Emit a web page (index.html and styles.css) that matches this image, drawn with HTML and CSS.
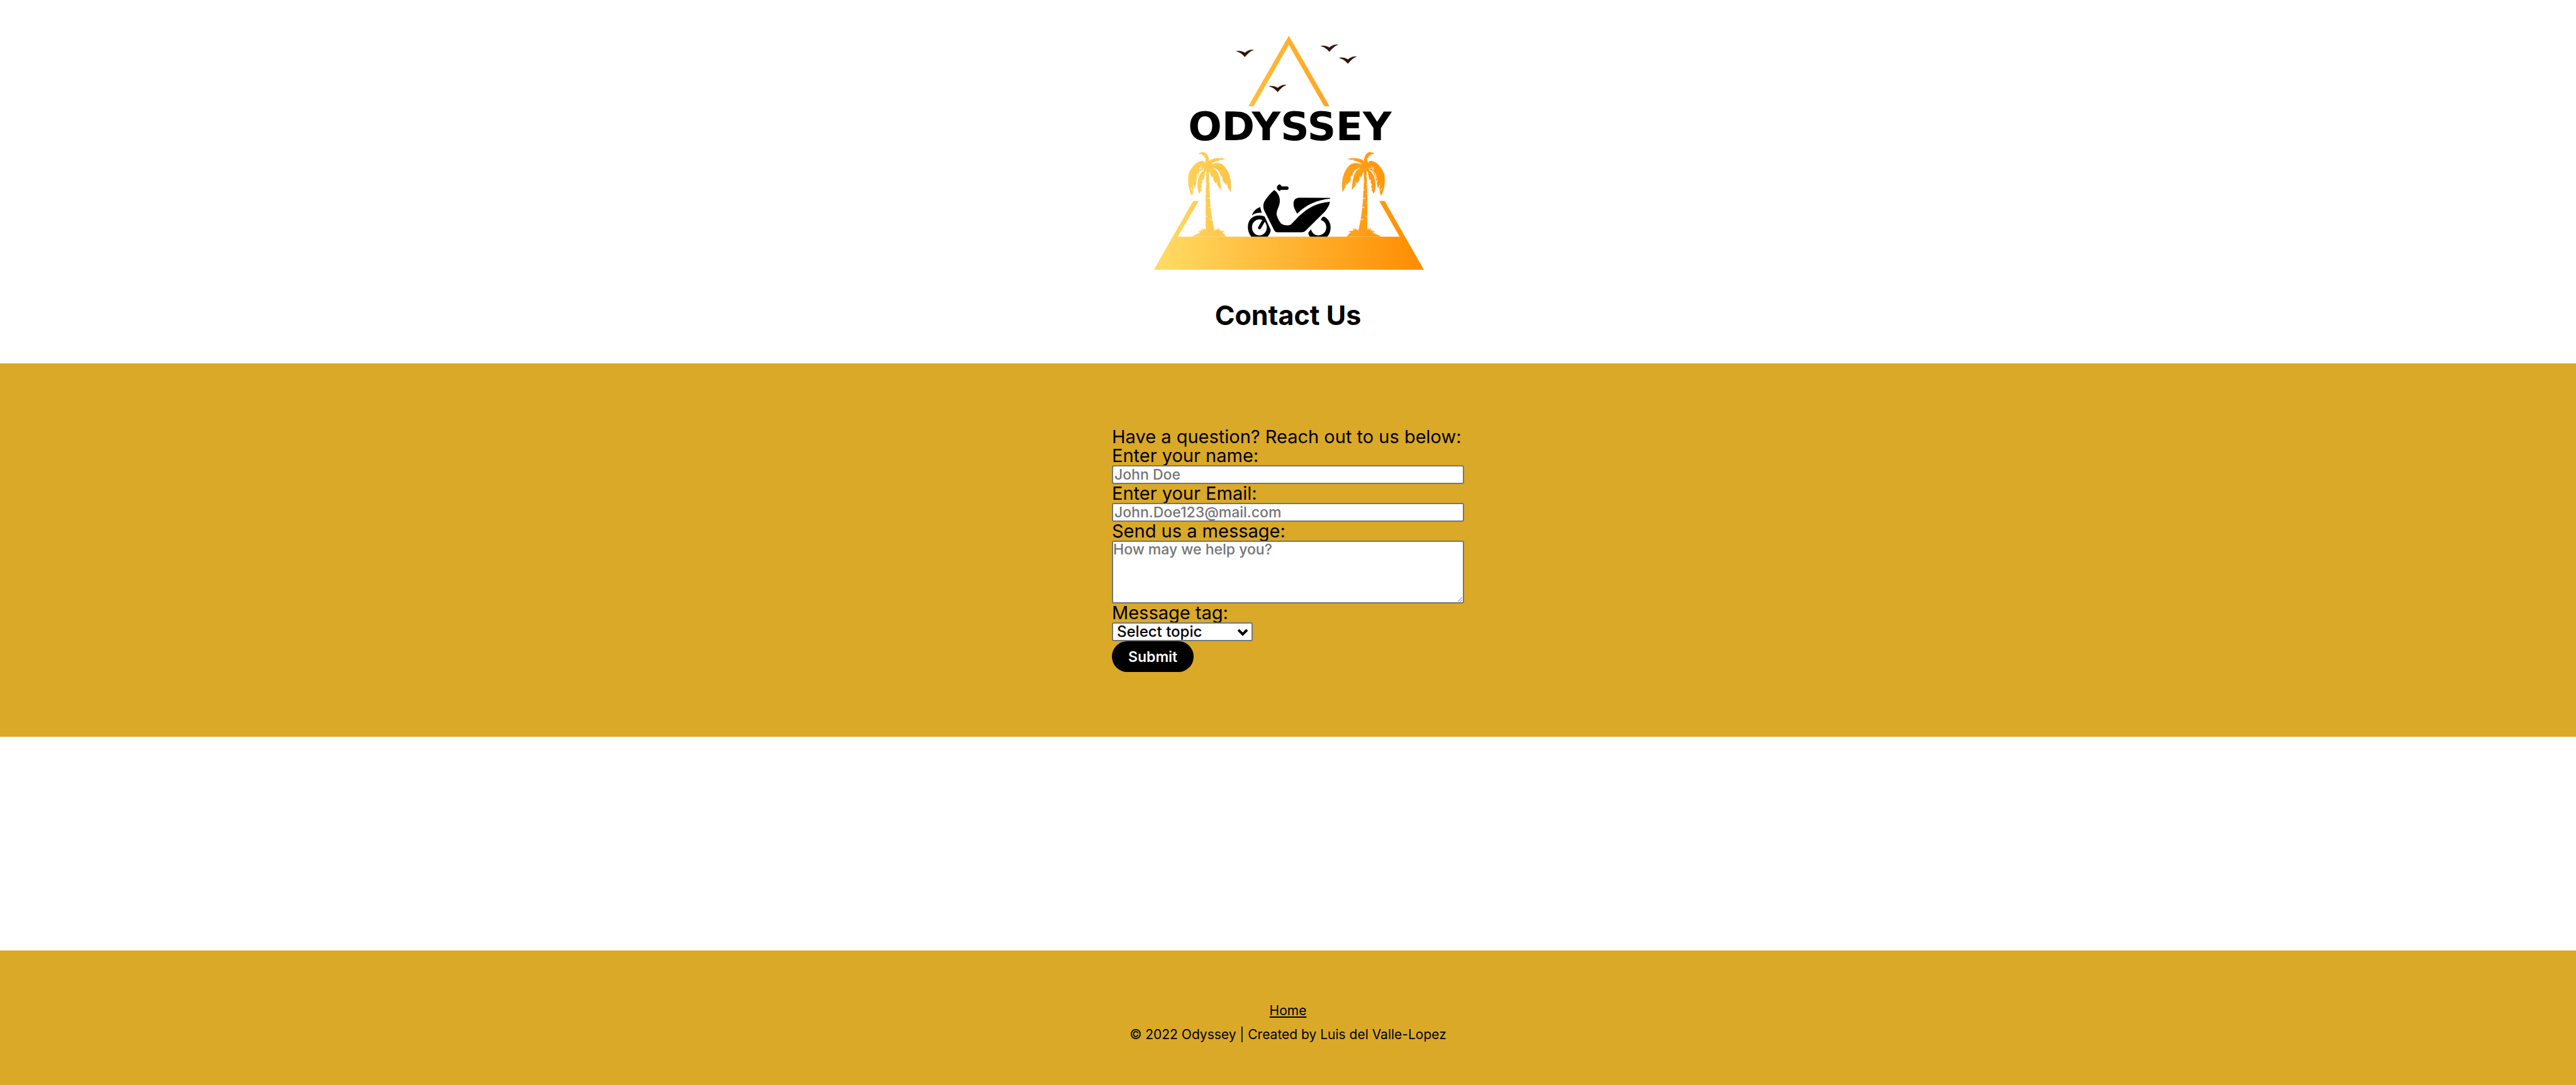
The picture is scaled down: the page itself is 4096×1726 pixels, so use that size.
FILE: index.html
```html
<!DOCTYPE html>
<html lang="en">
<head>
<meta charset="utf-8">
<title>Odyssey | Contact Us</title>
<link rel="stylesheet" href="styles.css">
</head>
<body>
<header class="header">
  <svg class="logo" viewBox="0 0 457 397" role="img" aria-label="Odyssey">
    <defs>
      <linearGradient id="sunset" gradientUnits="userSpaceOnUse" x1="50" y1="1343" x2="1523" y2="1260">
        <stop offset="0" stop-color="#ffdd66"/>
        <stop offset="1" stop-color="#ff8c00"/>
      </linearGradient>
      <path id="palm" d="M118,42 C130,30 148,28 160,38 C172,50 177,66 176,80 C198,66 225,60 270,69 L242,76 L237,71 L234,79 C215,81 198,90 186,101 C212,88 240,88 258,106 C292,140 304,190 296,254 L281,226 L277,200 L273,215 L264,204 L252,190 L249,160 L243,168 C236,140 225,122 193,119 C224,128 240,160 244,242 L222,214 L223,192 L216,206 L202,188 L199,162 L194,176 C188,162 184,148 178,137 L177,170 C177,210 180,250 182,290 C186,360 197,420 208,467 L218,455 L216,464 L230,448 L226,462 L240,453 L235,465 L264,470 L250,477 L265,487 L262,490 L275,498 L82,498 L128,476 L112,466 L132,470 L130,460 L142,466 L138,451 L150,461 L152,450 L159,465 L158,290 C160,230 159,180 163,138 L158,138 C152,150 152,170 146,188 L138,182 L140,200 L132,214 L138,222 L130,235 L136,238 L124,262 C108,240 110,190 124,160 C132,145 140,136 152,128 C138,128 127,138 122,152 L112,178 L103,215 L101,232 L91,232 L90,248 L83,274 C66,248 58,205 63,160 C68,130 100,86 134,80 C145,79 151,84 154,92 C159,84 157,74 159,66 L150,60 L151,52 L138,50 L139,43 Z"/>
      <path id="palm-cuts" d="M166,165h-6 M178,193h-7 M165,210h-8 M180,240h-8 M165,262h-9 M184,288l-16,-2 M164,313h-8 M188,338l-16,-1 M168,386l-12,2 M196,406l-16,-4 M108,180l6,-32 M111,160l8,-8 M120,148l8,-18 M130,128l4,-20 M136,120l14,4 M126,128l-2,-14 M106,200l-4,-16 M96,236l-8,-24 M86,246l-10,-18 M92,232l8,-12"/>
      <path id="bird" d="M501,134 C515,131 535,134 547,143 C560,133 575,124 593,127 C575,132 560,150 547,165 C538,155 525,140 501,134 Z"/>
      <clipPath id="island">
        <path d="M787,48 L1009,438 H980 L787,99 L595,438 H566 Z"/>
        <path d="M50,1343 L265,962 H295 L181,1159 H1391 L1280,962 H1310 L1524,1343 Z"/>
        <use href="#palm" transform="translate(177 660) scale(.986 1)"/>
        <use href="#palm" transform="translate(1371 660) scale(-.986 1)"/>
      </clipPath>
    </defs>
    <g transform="scale(.29145 .28768)">
      <rect width="1568" height="1380" fill="url(#sunset)" clip-path="url(#island)"/>
      <g fill="none" stroke="#fff" stroke-width="3">
        <use href="#palm-cuts" transform="translate(177 660) scale(.986 1)"/>
        <use href="#palm-cuts" transform="translate(1371 660) scale(-.986 1)"/>
      </g>
      <g fill="#330e05" stroke="#330e05" stroke-width="2">
        <use href="#bird"/>
        <use href="#bird" x="461" y="-29"/>
        <use href="#bird" x="562" y="37"/>
        <use href="#bird" x="179" y="194"/>
      </g>
      <g transform="translate(503 810) scale(.986 1)">
        <circle cx="236" cy="78" r="14"/>
        <ellipse cx="236" cy="78" rx="9" ry="18"/>
        <path d="M240,81 H277" fill="none" stroke="#000" stroke-width="19" stroke-linecap="round"/>
        <path d="M207,91 C222,100 240,125 238,155 C236,185 221,195 220,226 C225,250 240,275 252,281 C262,287 285,288 296,284 C304,280 330,248 350,230 C395,190 440,162 515,156 C513,175 500,195 485,213 L385,312 C375,322 370,325 355,325 L225,325 C215,325 210,320 206,312 L152,205 C142,180 147,160 160,143 C175,122 190,105 207,91 Z"/>
        <path d="M334,222 L318,192 C308,160 315,136 345,134 L515,135 L517,139 C440,147 385,172 334,222 Z"/>
        <path d="M84,231 C90,210 105,195 129,185 L138,218 C115,215 100,221 84,231 Z"/>
        <path fill-rule="evenodd" d="M80,349 C55,320 55,270 80,248 C100,228 140,228 155,240 L187,310 C188,325 178,340 170,349 Z M125,254 C102,254 84,274 84,298 C84,322 102,342 125,342 C148,342 166,322 166,298 C166,274 148,254 125,254 Z"/>
        <path d="M148,262 L126,300" fill="none" stroke="#000" stroke-width="17" stroke-linecap="round"/>
        <path d="M482,238 C510,250 520,280 519,300 C518,325 510,340 500,349 L405,349 C398,343 396,335 396,327 L410,308 C418,330 430,341 452,342 C480,340 495,320 495,298 C495,275 482,262 465,257 C467,248 474,241 482,238 Z"/>
      </g>
    </g>
    <text class="wordmark" x="231" y="180" text-anchor="middle">ODYSSEY</text>
  </svg>
  <h1 class="title">Contact Us</h1>
</header>
<main class="contact">
  <form class="form">
    <p class="line">Have a question? Reach out to us below:</p>
    <label class="line" for="name">Enter your name:</label>
    <input class="field" id="name" type="text" placeholder="John Doe">
    <label class="line" for="email">Enter your Email:</label>
    <input class="field" id="email" type="email" placeholder="John.Doe123@mail.com">
    <label class="line" for="message">Send us a message:</label>
    <textarea class="field message" id="message" placeholder="How may we help you?"></textarea>
    <label class="line" for="topic">Message tag:</label>
    <div class="picker">
      <select class="field topic" id="topic"><option>Select topic</option></select>
      <svg class="chevron" viewBox="0 0 16 12" aria-hidden="true"><path d="M1 2 L8 9 L15 2" fill="none" stroke="#000" stroke-width="4"/></svg>
    </div>
    <button class="submit" type="submit">Submit</button>
  </form>
</main>
<footer class="footer">
  <a class="home" href="#">Home</a>
  <p class="copyright">© 2022 Odyssey | Created by Luis del Valle-Lopez</p>
</footer>
</body>
</html>
```
FILE: styles.css
```css
* {
  box-sizing: border-box;
}

body {
  margin: 0;
  min-height: 100vh;
  display: flex;
  flex-direction: column;
  background: #fff;
  color: #000;
  font-family: Inter, "Liberation Sans", sans-serif;
}

p {
  margin: 0;
}

.header {
  display: flex;
  flex-direction: column;
  align-items: center;
  padding: 43px 0 52px;
}

.logo {
  width: 457px;
  height: 397px;
}

.wordmark {
  font-family: "DejaVu Sans", sans-serif;
  font-weight: 700;
  font-size: 63px;
}

.title {
  margin: 36px 0 0;
  font-size: 43px;
  line-height: 50px;
  font-weight: 700;
}

.contact {
  display: flex;
  justify-content: center;
  padding: 102px 0 103px;
  background: #daa928;
}

.form {
  width: 560px;
  display: flex;
  flex-direction: column;
  align-items: flex-start;
}

.line {
  font-size: 29px;
  line-height: 30px;
  white-space: nowrap;
}

.field {
  width: 100%;
  height: 30px;
  margin: 0;
  padding: 0 2px;
  border: 2px solid #767676;
  border-radius: 3px;
  background: #fff;
  color: #000;
  font-family: inherit;
  font-size: 23px;
  font-weight: 500;
  line-height: 26px;
}

.field::placeholder {
  color: #757575;
}

.message {
  height: 100px;
  padding: 0;
  line-height: 24px;
}

.picker {
  position: relative;
  width: 224px;
  height: 30px;
}

.topic {
  appearance: none;
  padding: 0 6px;
  font-size: 24px;
}

.chevron {
  position: absolute;
  right: 8px;
  top: 10px;
  width: 16px;
  height: 12px;
  pointer-events: none;
}

.submit {
  height: 49px;
  padding: 0 26px;
  border: 0;
  border-radius: 25px;
  background: #000;
  color: #fff;
  font-family: inherit;
  font-size: 23px;
  font-weight: 600;
}

.footer {
  margin-top: auto;
  display: flex;
  flex-direction: column;
  align-items: center;
  padding: 77px 0 61px;
  background: #daa928;
  font-size: 21px;
  line-height: 38px;
}

.home {
  color: #000;
}
```
